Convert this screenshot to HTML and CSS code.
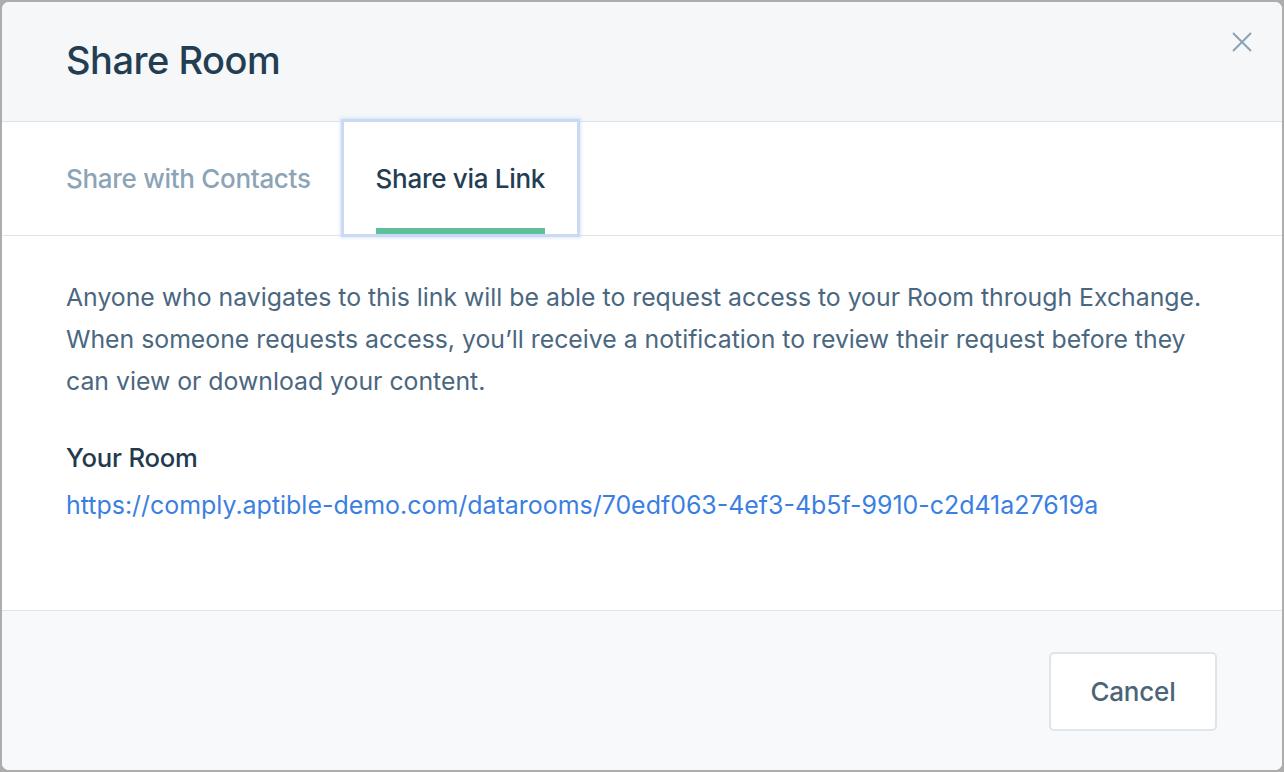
FILE: index.html
```html
<!DOCTYPE html>
<html lang="en">
<head>
<meta charset="utf-8">
<title>Share Room</title>
<link rel="stylesheet" href="styles.css">
</head>
<body>
<div class="backdrop">
  <div class="modal">
    <header class="modal-header">
      <h1 class="modal-title">Share Room</h1>
      <button class="close" aria-label="Close">
        <svg width="20" height="20" viewBox="0 0 20 20"><path d="M1 1 L19 19 M19 1 L1 19" stroke="#8ba3b4" stroke-width="2" fill="none"/></svg>
      </button>
    </header>
    <nav class="tabs">
      <div class="tab">Share with Contacts</div>
      <div class="tab active"><span class="tab-label">Share via Link</span></div>
    </nav>
    <section class="modal-body">
      <p class="intro">Anyone who navigates to this link will be able to request access to your Room through Exchange. When someone requests access, you’ll receive a notification to review their request before they can view or download your content.</p>
      <h2 class="label">Your Room</h2>
      <a class="room-link" href="#">https://comply.aptible-demo.com/datarooms/70edf063-4ef3-4b5f-9910-c2d41a27619a</a>
    </section>
    <footer class="modal-footer">
      <button class="btn">Cancel</button>
    </footer>
  </div>
</div>
</body>
</html>
```
FILE: styles.css
```css
* { box-sizing: border-box; }
html, body { margin: 0; padding: 0; }
body {
  font-family: "Inter", "Liberation Sans", Arial, sans-serif;
  background: #adadad;
  width: 1284px;
  height: 772px;
  overflow: hidden;
}
.backdrop {
  padding: 2px;
  height: 772px;
}
.modal {
  height: 768px;
  width: 1280px;
  background: #fff;
  border-radius: 7px;
  overflow: hidden;
  display: flex;
  flex-direction: column;
}
.modal-header {
  height: 120px;
  background: #f5f7f9;
  border-bottom: 1px solid #dde3ea;
  display: flex;
  align-items: center;
  padding: 0 30px 0 64px;
  position: relative;
}
.modal-title {
  margin: 0;
  font-size: 38px;
  font-weight: 500;
  color: #233d52;
  letter-spacing: -0.5px;
  padding-bottom: 3px;
}
.close {
  position: absolute;
  top: 30px;
  right: 30px;
  background: none;
  border: 0;
  padding: 0;
  width: 20px;
  height: 20px;
  cursor: pointer;
}
.close svg { display: block; }
.tabs {
  display: flex;
  height: 114px;
  padding-left: 32px;
  border-bottom: 1px solid #dde3ea;
}
.tab {
  display: flex;
  align-items: center;
  padding: 0 32px;
  font-size: 26px;
  font-weight: 500;
  color: #8ca4b5;
  letter-spacing: -0.3px;
  position: relative;
}
.tab.active {
  color: #233d52;
  margin-left: 1px;
  height: 112px;
  box-shadow: 0 0 0 3px #cbdaf4, 0 0 3px 4px rgba(203, 218, 244, 0.7);
  z-index: 1;
}
.tab-label {
  position: relative;
  height: 100%;
  display: flex;
  align-items: center;
}
.tab-label::after {
  content: "";
  position: absolute;
  left: 0;
  right: 0;
  bottom: 0;
  height: 6px;
  background: #5fbf9b;
}
.modal-body {
  flex: 1;
  padding: 40px 64px 0;
  border-bottom: 1px solid #dde3ea;
}
.intro {
  margin: 0 0 35px;
  font-size: 24.8px;
  line-height: 42px;
  color: #4a6780;
}
.label {
  margin: 0 0 5px;
  font-size: 25.7px;
  line-height: 42px;
  font-weight: 500;
  color: #23394d;
  letter-spacing: -0.2px;
}
.room-link {
  display: block;
  font-size: 24.95px;
  line-height: 42px;
  color: #3a7fe1;
  text-decoration: none;
}
.modal-footer {
  height: 159px;
  background: #f8f9fb;
  display: flex;
  align-items: flex-start;
  justify-content: flex-end;
  padding: 41px 65px 0 0;
}
.btn {
  width: 168px;
  height: 79px;
  background: #fff;
  border: 2px solid #dfe5ec;
  border-radius: 5px;
  font-family: "Inter", "Liberation Sans", Arial, sans-serif;
  font-size: 26px;
  font-weight: 500;
  color: #4a6478;
  letter-spacing: -0.2px;
  cursor: pointer;
}
```
